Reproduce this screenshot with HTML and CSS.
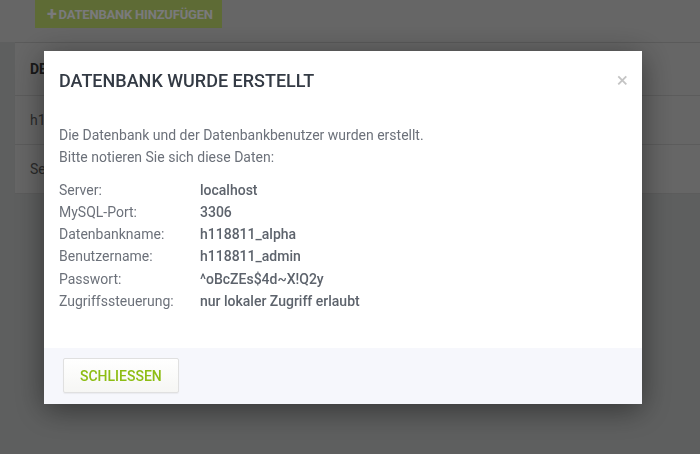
FILE: index.html
```html
<!DOCTYPE html>
<html lang="de">

<head>
    <meta charset="UTF-8">
    <meta name="viewport" content="width=device-width, initial-scale=1.0">
    <title>Datenbanken</title>
    <link rel="stylesheet" href="styles.css">
</head>

<body>

    <div class="toolbar">
        <button class="btn-add"><span class="plus">+</span>DATENBANK HINZUFÜGEN</button>
    </div>

    <div class="table-db">
        <table>
            <thead>
                <tr>
                    <th>DB</th>
                    <th></th>
                </tr>
            </thead>
            <tbody>
                <tr>
                    <td>h1</td>
                    <td></td>
                </tr>
                <tr>
                    <td>Se</td>
                    <td></td>
                </tr>
            </tbody>
        </table>
    </div>

    <div class="overlay">
        <div class="modal">
            <div class="modal-header">
                <h2>DATENBANK WURDE ERSTELLT</h2>
                <span class="close">&times;</span>
            </div>
            <div class="modal-body">
                <p>Die Datenbank und der Datenbankbenutzer wurden erstellt.<br>
                    Bitte notieren Sie sich diese Daten:</p>
                <dl class="data-list">
                    <dt>Server:</dt>
                    <dd>localhost</dd>
                    <dt>MySQL-Port:</dt>
                    <dd>3306</dd>
                    <dt>Datenbankname:</dt>
                    <dd>h118811_alpha</dd>
                    <dt>Benutzername:</dt>
                    <dd>h118811_admin</dd>
                    <dt>Passwort:</dt>
                    <dd>^oBcZEs$4d~X!Q2y</dd>
                    <dt>Zugriffssteuerung:</dt>
                    <dd>nur lokaler Zugriff erlaubt</dd>
                </dl>
            </div>
            <div class="modal-footer">
                <button class="btn-close">SCHLIESSEN</button>
            </div>
        </div>
    </div>

</body>

</html>
```

FILE: styles.css
```css
body {
    margin: 0;
    background-color: #bdbfbf;
    font-family: Roboto, 'Liberation Sans', sans-serif;
    height: 454px;
    overflow: hidden;
}

.toolbar {
    height: 50px;
    background-color: #cccccc;
    padding-left: 35px;
    box-sizing: border-box;
}

.btn-add {
    display: flex;
    align-items: center;
    margin-top: -8px;
    height: 36px;
    width: 187px;
    padding: 8px 0 0 12px;
    border: none;
    background-color: #bcd66a;
    color: #f4f4f8;
    font-family: Roboto, sans-serif;
    font-weight: bold;
    font-size: 13px;
    letter-spacing: -0.2px;
}

.plus {
    font-size: 18px;
    margin-right: 2px;
    line-height: 12px;
}

.table-db {
    margin-left: 15px;
    background-color: #cccccc;
    border-top: 1px solid #b4b4b4;
}

table {
    width: 100%;
    border-collapse: collapse;
}

th,
td {
    text-align: left;
    padding: 0 15px;
    font-size: 14px;
    color: #555;
    border-bottom: 1px solid #b8b8b8;
}

th {
    height: 52px;
    color: #333;
}

td {
    height: 48px;
}

.overlay {
    position: fixed;
    inset: 0;
    background-color: rgba(0, 0, 0, 0.5);
}

.modal {
    position: absolute;
    left: 44px;
    top: 51px;
    width: 598px;
    background-color: white;
    box-shadow: 0 6px 28px rgba(0, 0, 0, 0.45);
}

.modal-header {
    display: flex;
    justify-content: space-between;
    align-items: flex-start;
    padding: 19px 14px 15px 15px;
}

.modal-header h2 {
    margin: 0;
    font-size: 18px;
    font-weight: 500;
    color: #333a44;
    line-height: 21px;
}

.close {
    color: #c4c4c4;
    font-size: 21px;
    line-height: 16px;
    margin-top: 2px;
}

.modal-body {
    padding: 18px 15px 36px;
    font-size: 14px;
    line-height: 22.3px;
    color: #6c717a;
}

.modal-body p {
    margin: 0 0 10px;
}

.data-list {
    display: grid;
    grid-template-columns: 141px 1fr;
    margin: 0;
}

.data-list dd {
    margin: 0;
    font-weight: 500;
    color: #5d636c;
}

.modal-footer {
    background-color: #f6f7fc;
    padding: 10px 19px 11px;
}

.btn-close {
    height: 35px;
    padding: 0 16px;
    border: 1px solid #e0e0e0;
    border-radius: 2px;
    background: linear-gradient(#ffffff, #f6f6f4);
    color: #8dbd14;
    font-family: Roboto, sans-serif;
    font-size: 14px;
    font-weight: 500;
    box-shadow: 0 1px 1px rgba(0, 0, 0, 0.05);
}
```
